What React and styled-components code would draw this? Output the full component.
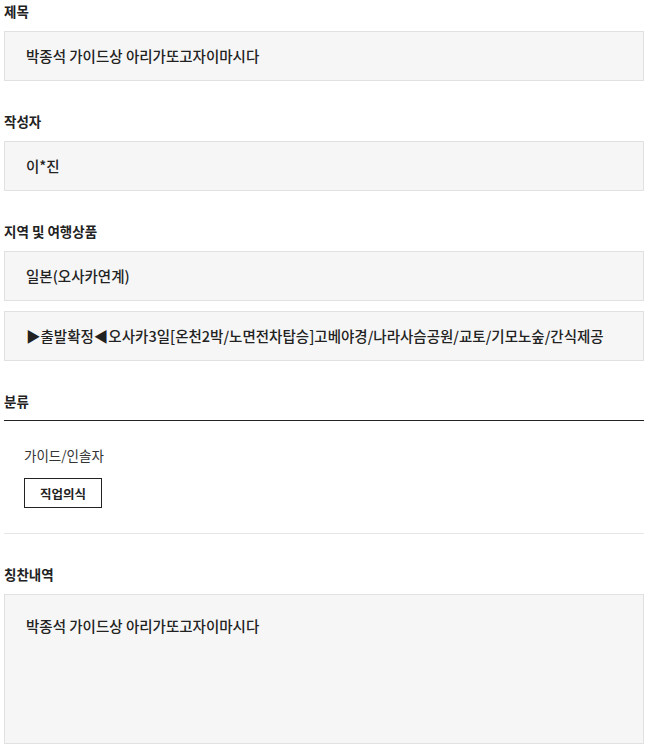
import styled, { createGlobalStyle } from 'styled-components';

const Ink = '#222222';
const BoxBg = '#f6f6f6';
const BoxLine = '#e1e1e1';

const Global = createGlobalStyle`
  body {
    margin: 0;
    background: #ffffff;
    font-family: "Noto Sans CJK KR", "Noto Sans", sans-serif;
    color: ${Ink};
  }
`;

const Page = styled.div`
  width: 640px;
  margin-left: 4px;
  padding-top: 1px;
  display: flex;
  flex-direction: column;
  gap: 30px;
`;

const Section = styled.section`
  display: flex;
  flex-direction: column;
  gap: ${props => props.gap || '10px'};
`;

const Label = styled.h3`
  margin: 0;
  font-size: 13.5px;
  font-weight: 700;
  line-height: 20px;
  color: ${Ink};
  padding-bottom: ${props => (props.ruled ? '9px' : '0')};
  border-bottom: ${props => (props.ruled ? `1px solid ${Ink}` : 'none')};
`;

const Field = styled.div`
  box-sizing: border-box;
  height: ${props => props.Height || '50px'};
  display: flex;
  align-items: ${props => (props.multi ? 'flex-start' : 'center')};
  padding: ${props => (props.multi ? '20px 21px' : '0 21px')};
  background: ${BoxBg};
  border: 1px solid ${BoxLine};
  font-size: 14.5px;
  font-weight: 500;
  line-height: 22px;
  color: ${Ink};
  white-space: nowrap;
`;

const Category = styled.div`
  display: flex;
  flex-direction: column;
  align-items: flex-start;
  gap: 13px;
  padding: 24px 20px 25px;
  border-bottom: 1px solid #e6e6e6;
`;

const CategoryName = styled.span`
  font-size: 13.5px;
  line-height: 20px;
  color: #333333;
`;

const Tag = styled.span`
  box-sizing: border-box;
  height: 30px;
  display: inline-flex;
  align-items: center;
  padding: 0 15px;
  border: 1px solid ${Ink};
  font-size: 12.5px;
  font-weight: 700;
  color: ${Ink};
`;

export default function App() {
  return (
    <>
      <Global />
      <Page>
        <Section>
          <Label>제목</Label>
          <Field>박종석 가이드상 아리가또고자이마시다</Field>
        </Section>
        <Section>
          <Label>작성자</Label>
          <Field>이*진</Field>
        </Section>
        <Section>
          <Label>지역 및 여행상품</Label>
          <Field>일본(오사카연계)</Field>
          <Field>▶출발확정◀오사카3일[온천2박/노면전차탑승]고베야경/나라사슴공원/교토/기모노숲/간식제공</Field>
        </Section>
        <Section gap="0">
          <Label ruled>분류</Label>
          <Category>
            <CategoryName>가이드/인솔자</CategoryName>
            <Tag>직업의식</Tag>
          </Category>
        </Section>
        <Section>
          <Label>칭찬내역</Label>
          <Field multi Height="150px">박종석 가이드상 아리가또고자이마시다</Field>
        </Section>
      </Page>
    </>
  );
}
